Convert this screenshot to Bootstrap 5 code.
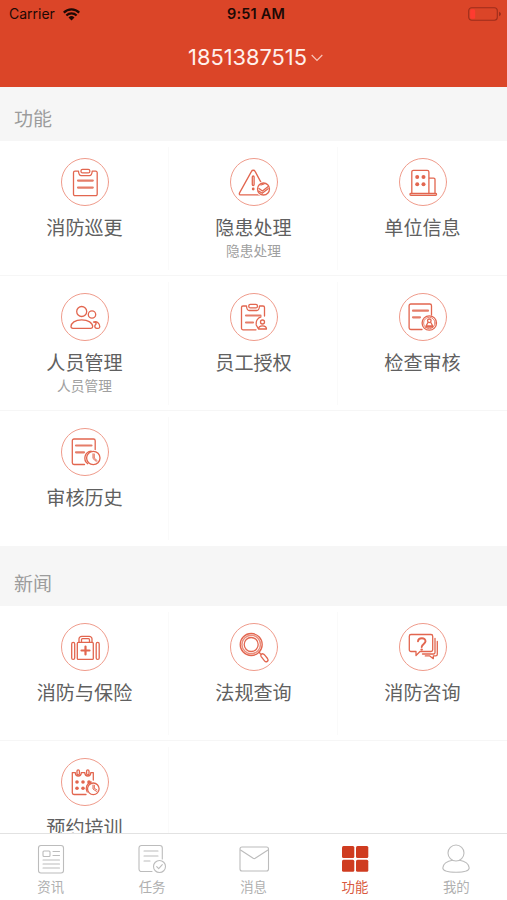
<!DOCTYPE html>
<html lang="zh-CN">
<head>
<meta charset="utf-8">
<meta name="viewport" content="width=device-width, initial-scale=1">
<title>功能</title>
<link href="https://cdn.jsdelivr.net/npm/bootstrap@5.3.0/dist/css/bootstrap.min.css" rel="stylesheet">
<style>
body{font-family:Inter,"Noto Sans CJK SC",sans-serif;color:#606060;background:#fff}
.screen{height:900px}
.app-head{background:#db4528;height:87px;flex:none}
.status{height:28px;color:#1d0905;font-size:14px;line-height:28px;padding:0 6px 0 9px}
.status svg{display:block}
.clock{font-weight:600;font-size:14.5px;letter-spacing:.2px;padding-left:2px}
.phone{height:59px;color:#fff0ec;font-size:21.8px;line-height:59px;padding-left:4px}
.sec{background:#f6f6f6;color:#9c9c9c;font-size:19px;line-height:28px;padding-left:14px;flex:none}
.sec-a{height:54px;padding-top:19px}
.sec-b{height:60px;padding-top:25px}
.cell{height:135px;padding-top:17px;border-bottom:1px solid #f6f6f6}
.cell:not(:nth-child(3n)){background:linear-gradient(#fafafa,#fafafa) 100% 6px/1px 123px no-repeat}
.last-row .cell{border-bottom-color:transparent}
.cell.blank{background:none}
.cell svg{display:block;width:48px;height:48px;fill:none;stroke:#e2664f;stroke-width:1.3;stroke-linejoin:round;stroke-linecap:round}
.cell .ring{stroke:#ef9b8b;stroke-width:1}
.cell .dot{fill:#e2664f;stroke:none}
.cell .cut{fill:#fff}
.cell .bar{stroke-width:2.2;stroke:#e57d69}
.cell .name{font-size:19.1px;line-height:28px;margin-top:8px}
.cell .hint{font-size:13.7px;line-height:20px;color:#a0a0a0;margin-top:-1px}
.tabs{height:67px;flex:none;border-top:1px solid #e2e2e2;color:#b0b0b0;font-size:13.4px;line-height:20px;padding-top:9px}
.tabs svg{display:block;width:32px;height:32px;fill:none;stroke:#bcbcbc;stroke-width:1.1;stroke-linejoin:round;stroke-linecap:round}
.tabs .lbl{margin-top:2px}
.tabs .on{color:#d9593f}
.tabs .on svg{fill:#cf3c20;stroke:none}
</style>
<script src="https://cdn.jsdelivr.net/npm/bootstrap@5.3.0/dist/js/bootstrap.bundle.min.js"></script>
</head>
<body>
<div class="screen d-flex flex-column overflow-hidden">
<header class="app-head">
  <div class="status row g-0 align-items-center">
    <div class="col d-flex align-items-center"><span>Carrier</span>
      <svg class="ms-2" width="17" height="13" viewBox="0 0 17 13"><g fill="none" stroke="#1d0905" stroke-width="2.2"><path d="M.8 4.6a10.9 10.9 0 0 1 15.4 0M3.4 7.5a7.2 7.2 0 0 1 10.2 0"/></g><path fill="#1d0905" d="M8.5 12.6 5.5 9.5a4.3 4.3 0 0 1 6 0z"/></svg>
    </div>
    <div class="col-auto clock">9:51 AM</div>
    <div class="col d-flex justify-content-end">
      <svg width="33" height="14" viewBox="0 0 33 14"><rect x=".7" y=".7" width="28.6" height="12.6" rx="3" fill="none" stroke="#9d2d1b" stroke-width="1.1"/><rect x="2.2" y="2.3" width="5" height="9.4" rx="1.5" fill="#ff3b30"/><path d="M31 4.7q2 .7 2 2.3t-2 2.3z" fill="#9d2d1b"/></svg>
    </div>
  </div>
  <div class="phone d-flex justify-content-center align-items-center"><span>1851387515</span>
    <svg class="ms-1" width="12" height="8" viewBox="0 0 12 8"><path d="M.7 1 6 6.3 11.3 1" fill="none" stroke="#f8c6ba" stroke-width="1.2"/></svg>
  </div>
</header>
<main class="flex-grow-1 overflow-hidden">
  <div class="sec sec-a">功能</div>
  <div class="row g-0">
    <div class="cell col-4 d-flex flex-column align-items-center">
      <svg viewBox="0 0 48 48"><circle class="ring" cx="24" cy="24" r="23.5"/><path d="M17.500 13.200H14a1.500 1.500 0 0 0-1.500 1.500v21.500a1.500 1.500 0 0 0 1.500 1.500h20.700a1.500 1.500 0 0 0 1.500-1.500V14.700a1.500 1.500 0 0 0-1.500-1.500h-3.500c-.2 2.600-1 4.400-2.700 4.400h-8.300c-1.700 0-2.500-1.800-2.700-4.400z"/><rect x="20" y="11.300" width="8.800" height="3.600" rx="1.500"/><path class="bar" d="M17 22.600h14.800M17 29.600h14.800"/></svg>
      <div class="name">消防巡更</div>
    </div>
    <div class="cell col-4 d-flex flex-column align-items-center">
      <svg viewBox="0 0 48 48"><circle class="ring" cx="24" cy="24" r="23.500"/><path d="M21.500 13.400a2 2 0 0 1 3.600 0l11.400 21.200q1.200 2.300-1.300 2.300H11q-2.500 0-1.300-2.300z"/><rect x="22.300" y="18" width="1.800" height="9.500" rx=".9"/><circle class="dot" cx="23.200" cy="31" r="1.400"/><circle cx="33.500" cy="31" r="7.600" class="cut" stroke="none"/><circle cx="33.500" cy="31" r="6"/><path d="M29 30.500l3.400 2.600 5.800-4.600M28.800 33l3.400 2.300 5.900-4.600M31 27l3-1"/></svg>
      <div class="name">隐患处理</div><div class="hint">隐患处理</div>
    </div>
    <div class="cell col-4 d-flex flex-column align-items-center">
      <svg viewBox="0 0 48 48"><circle class="ring" cx="24" cy="24" r="23.500"/><path d="M12.800 35.500V14a1.700 1.700 0 0 1 1.700-1.700h13.700a1.700 1.700 0 0 1 1.700 1.700v21.500M30 20.200h4.700a1.300 1.300 0 0 1 1.300 1.300v14"/><rect x="11" y="35.500" width="26.500" height="1.800" rx=".8"/><g class="dot"><circle cx="18.200" cy="19" r="2"/><circle cx="24.500" cy="19" r="2"/><circle cx="18.200" cy="26.200" r="2"/><circle cx="24.500" cy="26.200" r="2"/></g></svg>
      <div class="name">单位信息</div>
    </div>
    <div class="cell col-4 d-flex flex-column align-items-center">
      <svg viewBox="0 0 48 48"><circle class="ring" cx="24" cy="24" r="23.500"/><circle cx="20.700" cy="18.500" r="5"/><circle cx="31" cy="21.500" r="3.700"/><path d="M12 35.300h18q1.700 0 1.700-1.700c0-3.600-4.400-6.800-11-6.800s-10.700 3.200-10.700 6.800q0 1.700 2 1.700zM32.500 29c3.500-1.300 6.300 1.500 6.300 4.800q0 1.500-1.500 1.500h-1.500c-1.500 0-2-1-2-2.300s1.300-1.300 1.300-2.300-1-1.700-2.600-1.700z"/></svg>
      <div class="name">人员管理</div><div class="hint">人员管理</div>
    </div>
    <div class="cell col-4 d-flex flex-column align-items-center">
      <svg viewBox="0 0 48 48"><circle class="ring" cx="24" cy="24" r="23.500"/><path d="M26 36.800H13a1.500 1.500 0 0 1-1.500-1.500V14.500A1.500 1.500 0 0 1 13 13h3.500c.2 2.800 1 4.500 2.700 4.500h7.600c1.700 0 2.500-1.700 2.700-4.500H33a1.500 1.500 0 0 1 1.500 1.500V23"/><rect x="18.800" y="11.300" width="8.600" height="3.600" rx="1.500"/><path class="bar" d="M16 22.500h14.500M16 29.500h7"/><path d="M31 23.800a7 7 0 0 0-4.800 8.200l2 3.300"/><circle cx="32.500" cy="29" r="2"/><path d="M28.500 36h8q0-3.200-4-3.200t-4 3.200z"/></svg>
      <div class="name">员工授权</div>
    </div>
    <div class="cell col-4 d-flex flex-column align-items-center">
      <svg viewBox="0 0 48 48"><circle class="ring" cx="24" cy="24" r="23.500"/><path d="M23 36.500H11.800a1.700 1.700 0 0 1-1.700-1.700V12.700A1.700 1.700 0 0 1 11.800 11h19a1.700 1.700 0 0 1 1.700 1.700V22"/><path class="bar" d="M14 17.700h15M14 24.300h7"/><circle cx="30.300" cy="30" r="7.200"/><circle cx="30.300" cy="30" r="5.700" stroke-width=".8"/><circle cx="30.300" cy="27.800" r="1.800"/><path d="M29 29.500l-2 3.500h6.800l-2-3.500M26.700 34.200h7"/></svg>
      <div class="name">检查审核</div>
    </div>
  </div>
  <div class="row g-0 last-row">
    <div class="cell col-4 d-flex flex-column align-items-center">
      <svg viewBox="0 0 48 48"><circle class="ring" cx="24" cy="24" r="23.500"/><path d="M23.500 36.500H13a1.700 1.700 0 0 1-1.700-1.700V12.700A1.700 1.700 0 0 1 13 11h19.500a1.700 1.700 0 0 1 1.700 1.700v8.800"/><path class="bar" d="M15 17.500h15.500M15 24.300h8"/><path d="M26.700 35.700a7 7 0 0 1 3.500-12.600"/><circle cx="32.300" cy="30" r="6.700"/><path d="M32 25.800v4.700l3.300 3M33.200 26v4l3 2.700" stroke-width="1"/></svg>
      <div class="name">审核历史</div>
    </div>
    <div class="cell blank col-4"></div>
  </div>
  <div class="sec sec-b">新闻</div>
  <div class="row g-0">
    <div class="cell col-4 d-flex flex-column align-items-center">
      <svg viewBox="0 0 48 48"><circle class="ring" cx="24" cy="24" r="23.500"/><rect x="16.300" y="19.400" width="16" height="17" rx="1"/><rect x="10.700" y="19.400" width="3" height="17" rx="1.500"/><rect x="35.200" y="19.400" width="3" height="17" rx="1.500"/><path d="M18 19v-3a2.700 2.700 0 0 1 2.700-2.700h7.600A2.700 2.700 0 0 1 31 16v3M20.500 19v-2.300q0-1 1-1h6q1 0 1 1V19"/><path d="M24.500 23.500v8M20.500 27.500h8" stroke-width="2.200"/></svg>
      <div class="name">消防与保险</div>
    </div>
    <div class="cell col-4 d-flex flex-column align-items-center">
      <svg viewBox="0 0 48 48"><circle class="ring" cx="24" cy="24" r="23.500"/><circle cx="21.200" cy="21.500" r="11"/><circle cx="21.200" cy="21.500" r="9.300" stroke-width="1.500" stroke="#ea8f7e"/><circle cx="21.200" cy="21.500" r="7"/><path d="M29 29l2 2.600M31 31.700c1.200-1.600 2.700-1 4 .6l2.500 3.200c1.700 2.500-1.300 4.400-3 2.300l-3.300-4.200q-.7-1-.2-1.900z"/></svg>
      <div class="name">法规查询</div>
    </div>
    <div class="cell col-4 d-flex flex-column align-items-center">
      <svg viewBox="0 0 48 48"><circle class="ring" cx="24" cy="24" r="23.500"/><path d="M12 11.500h20a1.700 1.700 0 0 1 1.700 1.700v13.600a1.700 1.700 0 0 1-1.700 1.700H21l-4 4v-4h-5a1.700 1.700 0 0 1-1.700-1.700V13.200a1.700 1.700 0 0 1 1.700-1.700zM36 15.500v14a1.500 1.500 0 0 1-1.500 1.500H23.500M38.300 18.500v12.700a1.700 1.700 0 0 1-1.700 1.700h-2.300v2.800l-3.500-2.800h-4.500"/><path d="M19 18.200c.3-4 7.800-4 7.500.2-.2 2.500-3.600 2.600-3.800 5.600" stroke-width="1.900"/><circle class="dot" cx="22.700" cy="26.600" r="1.200"/></svg>
      <div class="name">消防咨询</div>
    </div>
    <div class="cell col-4 d-flex flex-column align-items-center">
      <svg viewBox="0 0 48 48"><circle class="ring" cx="24" cy="24" r="23.500"/><path d="M25 36.500H13a1.700 1.700 0 0 1-1.700-1.700V14.600h3c.2 4.500 5.800 4.500 6 0h3.500c.2 4.500 5.800 4.500 6 0h2.500V22"/><rect x="16" y="11.800" width="2.400" height="5" rx="1.200"/><rect x="25.600" y="11.800" width="2.400" height="5" rx="1.200"/><g class="dot"><circle cx="16" cy="24" r="1.800"/><circle cx="22" cy="24" r="1.800"/><circle cx="28" cy="24" r="1.800"/><circle cx="16" cy="30.300" r="1.800"/><circle cx="22" cy="30.300" r="1.800"/></g><path d="M26.200 34a6.700 6.700 0 0 1 4-10"/><circle cx="32.300" cy="30.800" r="5.800"/><path d="M32 27v4l3.500 2.400M33.300 27.300v3l2.700 1.700" stroke-width="1"/></svg>
      <div class="name">预约培训</div>
    </div>
    <div class="cell blank col-4"></div>
  </div>
</main>
<nav class="tabs row g-0 text-center">
  <div class="col d-flex flex-column align-items-center">
    <svg viewBox="0 0 32 32"><rect x="3.500" y="2.500" width="25" height="27.500" rx="2.500"/><rect x="8" y="8" width="7" height="5.500" rx="1"/><path d="M18 8.500h6.500M18 12.500h6.500M8 17h16.500M8 21h16.500M8 25h16.500"/></svg><div class="lbl">资讯</div>
  </div>
  <div class="col d-flex flex-column align-items-center">
    <svg viewBox="0 0 32 32"><path d="M16 28.500H5.500A2.500 2.500 0 0 1 3 26V5a2.500 2.500 0 0 1 2.500-2.500h18.300A2.500 2.500 0 0 1 26.300 5v11M8 8h14M8 13h14M8 18h6"/><circle cx="23.500" cy="23.500" r="6"/><path d="M20.700 23.700l2 2 3.600-4"/></svg><div class="lbl">任务</div>
  </div>
  <div class="col d-flex flex-column align-items-center">
    <svg viewBox="0 0 32 32"><rect x="2" y="4" width="28.500" height="24" rx="2"/><path d="M2.500 7l12.700 8.300q1 .6 2 0L30 7"/></svg><div class="lbl">消息</div>
  </div>
  <div class="col on d-flex flex-column align-items-center">
    <svg viewBox="0 0 32 32"><rect x="3" y="3" width="12.300" height="12" rx="1.500"/><rect x="17" y="3" width="12.300" height="12" rx="1.500"/><rect x="3" y="16.800" width="12.300" height="12" rx="1.500"/><rect x="17" y="16.800" width="12.300" height="12" rx="1.500"/></svg><div class="lbl">功能</div>
  </div>
  <div class="col d-flex flex-column align-items-center">
    <svg viewBox="0 0 32 32"><circle cx="16" cy="10" r="8"/><path d="M12.500 17.300C7 18 2.800 21 2.800 25q0 4.200 13.200 4.200T29.200 25c0-4-4.200-7-9.700-7.700"/></svg><div class="lbl">我的</div>
  </div>
</nav>
</div>
</body>
</html>
